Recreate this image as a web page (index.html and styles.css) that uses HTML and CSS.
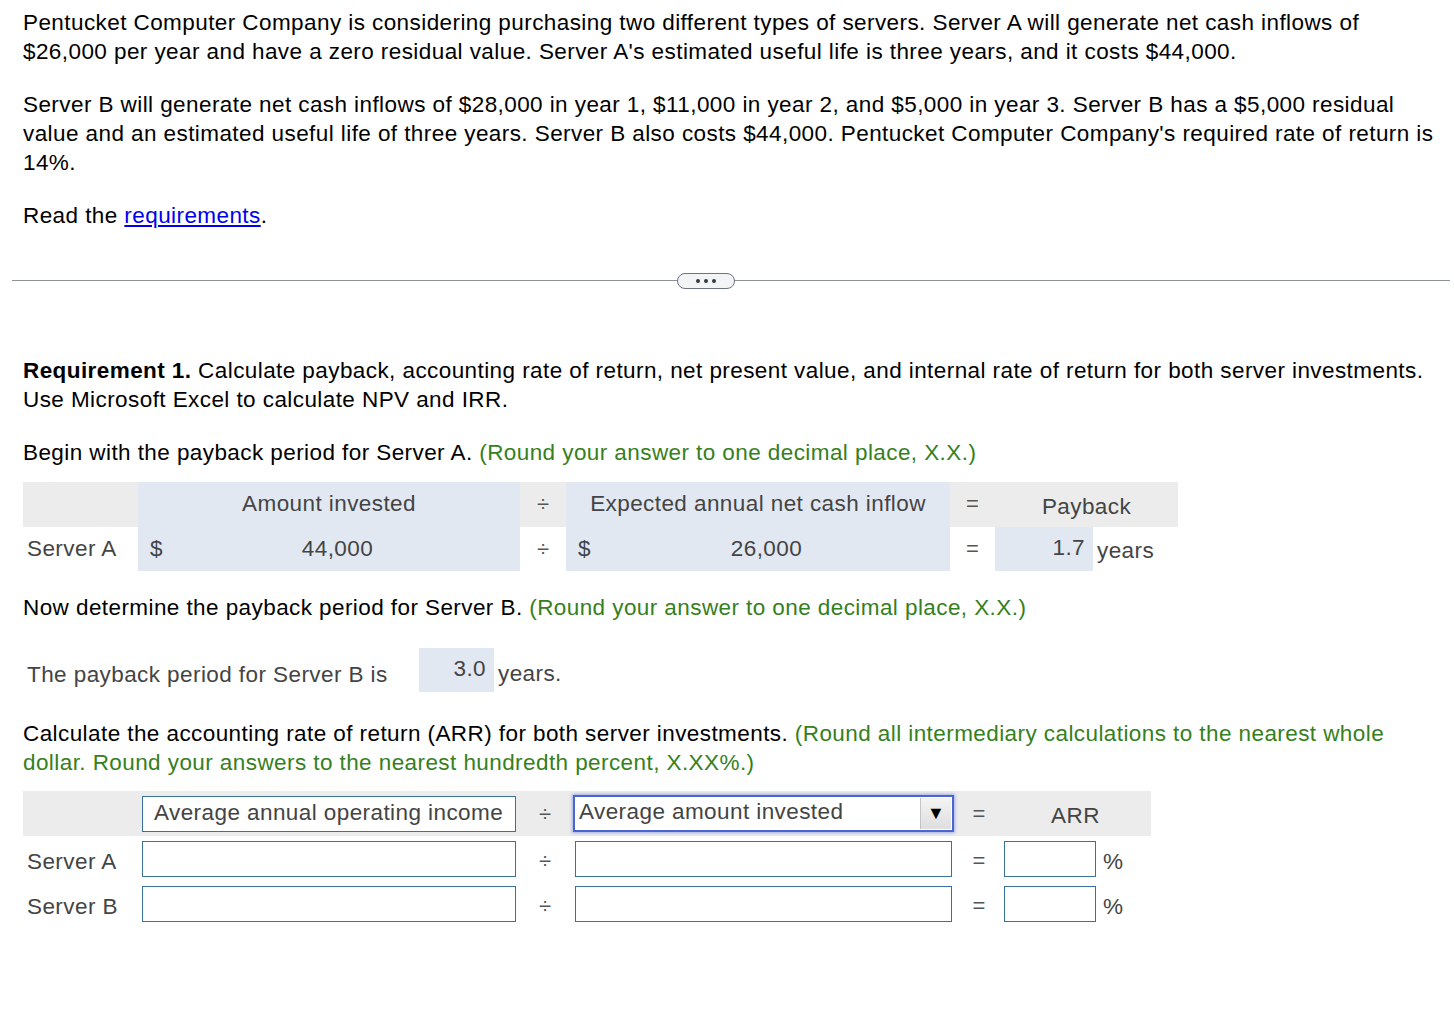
FILE: index.html
```html
<!DOCTYPE html>
<html>
<head>
<meta charset="utf-8">
<link rel="stylesheet" href="styles.css">
</head>
<body>
<div class="top">
  <p class="para">Pentucket Computer Company is considering purchasing two different types of servers. Server A will generate net cash inflows of $26,000 per year and have a zero residual value. Server A's estimated useful life is three years, and it costs $44,000.</p>
  <p class="para">Server B will generate net cash inflows of $28,000 in year 1, $11,000 in year 2, and $5,000 in year 3. Server B has a $5,000 residual value and an estimated useful life of three years. Server B also costs $44,000. Pentucket Computer Company's required rate of return is 14%.</p>
  <p class="para">Read the <a class="link" href="#">requirements</a>.</p>
</div>

<div class="divider">
  <div class="pill"><span class="dot"></span><span class="dot"></span><span class="dot"></span></div>
</div>

<div class="main">
  <p class="para req"><b>Requirement 1.</b> Calculate payback, accounting rate of return, net present value, and internal rate of return for both server investments. Use Microsoft Excel to calculate NPV and IRR.</p>
  <p class="para">Begin with the payback period for Server A. <span class="hint">(Round your answer to one decimal place, X.X.)</span></p>

  <div class="pb-table">
    <div class="pb-head blank"></div>
    <div class="pb-head blue center">Amount invested</div>
    <div class="pb-head op">÷</div>
    <div class="pb-head blue center">Expected annual net cash inflow</div>
    <div class="pb-head op">=</div>
    <div class="pb-head center payhead">Payback</div>

    <div class="pb-cell label">Server A</div>
    <div class="pb-cell blue money"><span class="cur">$</span><span class="amt">44,000</span></div>
    <div class="pb-cell op">÷</div>
    <div class="pb-cell blue money"><span class="cur">$</span><span class="amt">26,000</span></div>
    <div class="pb-cell op">=</div>
    <div class="pb-cell result"><span class="ans">1.7</span><span class="unit">years</span></div>
  </div>

  <p class="para now">Now determine the payback period for Server B. <span class="hint">(Round your answer to one decimal place, X.X.)</span></p>

  <div class="pb-b">
    <span class="pb-b-label">The payback period for Server B is</span>
    <span class="ans ansb">3.0</span>
    <span class="unit">years.</span>
  </div>

  <p class="para calc">Calculate the accounting rate of return (ARR) for both server investments. <span class="hint">(Round all intermediary calculations to the nearest whole dollar. Round your answers to the nearest hundredth percent, X.XX%.)</span></p>

  <div class="arr-table">
    <div class="ah blank"></div>
    <div class="ah"><div class="box wide">Average annual operating income</div></div>
    <div class="ah op">÷</div>
    <div class="ah"><div class="select"><span class="sel-text">Average amount invested</span><span class="sel-btn">▼</span></div></div>
    <div class="ah op">=</div>
    <div class="ah center arrhead">ARR</div>

    <div class="ac label">Server A</div>
    <div class="ac"><div class="box wide"></div></div>
    <div class="ac op">÷</div>
    <div class="ac"><div class="box wide2"></div></div>
    <div class="ac op">=</div>
    <div class="ac pct"><div class="box small"></div><span class="unit">%</span></div>

    <div class="ac label">Server B</div>
    <div class="ac"><div class="box wide"></div></div>
    <div class="ac op">÷</div>
    <div class="ac"><div class="box wide2"></div></div>
    <div class="ac op">=</div>
    <div class="ac pct"><div class="box small"></div><span class="unit">%</span></div>
  </div>
</div>
</body>
</html>
```

FILE: styles.css
```css
* { box-sizing: border-box; }
body {
  margin: 0;
  font-family: "Liberation Sans", Arial, sans-serif;
  font-size: 22.5px;
  letter-spacing: 0.42px;
  color: #000;
  background: #fff;
}
.para {
  margin: 0 0 24px 0;
  line-height: 29px;
}
.top {
  padding: 8px 20px 0 23px;
}
.link {
  color: #0000ee;
  text-decoration: underline;
}
.divider {
  margin: 43px 4px 0 12px;
  height: 16px;
  position: relative;
  display: flex;
  align-items: center;
}
.divider::before {
  content: "";
  position: absolute;
  left: 0;
  right: 0;
  top: 7px;
  height: 1px;
  background: #8c939c;
}
.pill {
  position: relative;
  margin-left: 665px;
  width: 58px;
  height: 16px;
  border: 1.5px solid #6b7280;
  border-radius: 8px;
  background: #f3f4f6;
  display: flex;
  align-items: center;
  justify-content: center;
  gap: 4px;
}
.dot {
  width: 4px;
  height: 4px;
  border-radius: 50%;
  background: #333a44;
}
.main {
  padding: 67px 20px 0 23px;
}
.req { margin-bottom: 24px; }
.hint { color: #358020; }

.pb-table {
  display: grid;
  grid-template-columns: 115px 382px 46px 384px 45px 183px;
  grid-template-rows: 45px 44px;
  margin-top: -9px;
  color: #444;
}
.pb-head {
  background: #ececec;
  display: flex;
  align-items: center;
  padding-bottom: 1px;
}
.pb-head.blue, .pb-cell.blue { background: #e2e8f2; }
.center { justify-content: center; }
.payhead { padding-top: 6px; }
.op {
  justify-content: center;
  display: flex;
  align-items: center;
  font-size: 22px;
  color: #555;
  letter-spacing: 0;
}
.pb-cell {
  display: flex;
  align-items: center;
}
.label { padding-left: 4px; color: #444; }
.money { padding-left: 12px; }
.money .amt { flex: 1; text-align: center; padding-right: 8px; }
.result { align-items: stretch; }
.ans {
  background: #e2e8f2;
  width: 98px;
  display: flex;
  align-items: center;
  justify-content: flex-end;
  padding-right: 8px;
  padding-bottom: 2px;
}
.unit { padding-left: 4px; display: flex; align-items: center; padding-top: 4px; color: #444; }
.now { margin-top: 22px; margin-bottom: 26px; }
.pb-b {
  display: flex;
  align-items: stretch;
  height: 44px;
  color: #444;
  padding-left: 4px;
}
.pb-b-label { display: flex; align-items: center; padding-top: 9px; width: 392px; }
.pb-b .unit { padding-top: 7px; }
.ansb { width: 75px; }
.calc { margin-top: 27px; margin-bottom: 14px; }

.arr-table {
  display: grid;
  grid-template-columns: 115px 382px 50px 388px 42px 151px;
  grid-template-rows: 45px 45px 45px;
  color: #444;
}
.ah {
  background: #ececec;
  display: flex;
  align-items: center;
}
.ac {
  display: flex;
  align-items: center;
}
.ac.label { padding-top: 6px; }
.ac.op { padding-top: 4px; }
.arrhead { padding-top: 4px; }
.box {
  border: 1px solid #3a7399;
  background: #fff;
  height: 36px;
}
.box.wide {
  margin-left: 4px;
  width: 374px;
  display: flex;
  align-items: center;
  padding-left: 11px;
  padding-bottom: 2px;
  color: #444;
  white-space: nowrap;
}
.box.wide2 {
  margin-left: 5px;
  width: 377px;
}
.box.small {
  margin-left: 4px;
  width: 92px;
}
.pct .unit { padding-left: 7px; padding-top: 6px; }
.select {
  margin-left: 3px;
  width: 381px;
  height: 37px;
  border: 2px solid #4a64d0;
  box-shadow: 0 0 3px 1px rgba(70, 100, 220, 0.45);
  background: #fff;
  display: flex;
  align-items: stretch;
}
.sel-text {
  flex: 1;
  padding-left: 4px;
  display: flex;
  align-items: center;
  padding-bottom: 4px;
  color: #444;
  white-space: nowrap;
}
.sel-btn {
  width: 31px;
  margin: 1px 1px 1px 0;
  background: linear-gradient(#f4f4f4, #dedede);
  border-left: 1px solid #c4c4c4;
  display: flex;
  align-items: center;
  justify-content: center;
  font-size: 18px;
  color: #000;
  letter-spacing: 0;
}
```
